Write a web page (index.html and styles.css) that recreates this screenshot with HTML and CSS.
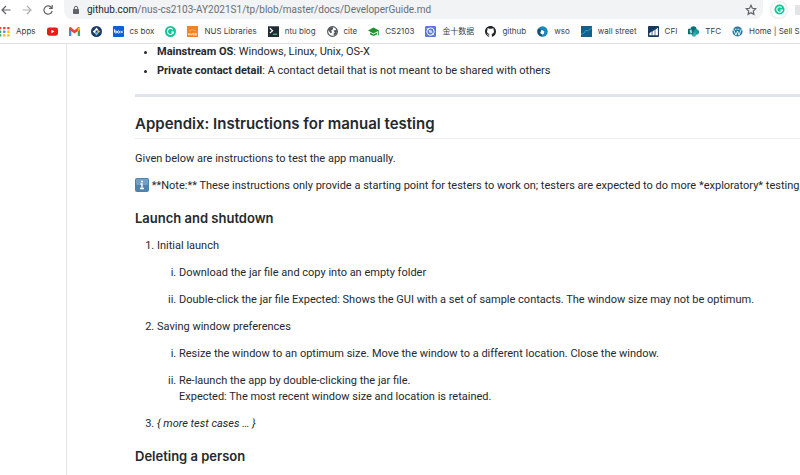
FILE: index.html
```
<!DOCTYPE html>
<html lang="en">
<head>
<meta charset="utf-8">
<title>DeveloperGuide.md</title>
<link rel="stylesheet" href="styles.css">
</head>
<body>
<header class="browser">
  <div class="toolbar">
    <button class="nav" aria-label="Back"><svg viewBox="0 0 12 12"><path d="M10.500 6H2M6 2L2 6l4 4"/></svg></button>
    <button class="nav faded" aria-label="Forward"><svg viewBox="0 0 12 12"><path d="M1.500 6H10M6 2l4 4-4 4"/></svg></button>
    <button class="nav" aria-label="Reload"><svg viewBox="0 0 12 12"><path d="M9.500 3.500A4.200 4.200 0 1 0 10.200 7M10.200 1v3.300H7"/></svg></button>
    <div class="address">
      <svg class="lock" viewBox="0 0 8 10"><rect x="1" y="4" width="6" height="5" rx=".7" fill="#5f6368"/><path d="M2.300 4.500V3a1.700 1.700 0 0 1 3.400 0v1.500" fill="none" stroke="#5f6368"/></svg>
      <a class="url" href="#"><span class="host">github.com</span>/nus-cs2103-AY2021S1/tp/blob/master/docs/DeveloperGuide.md</a>
      <button class="star" aria-label="Bookmark this page"><svg viewBox="0 0 12 12"><path d="M6 1.300l1.400 3 3.300.4-2.400 2.300.6 3.300L6 8.700l-2.900 1.600.6-3.300L1.300 4.700l3.300-.4z"/></svg></button>
    </div>
    <button class="extension" aria-label="Grammarly"><svg viewBox="0 0 12 12"><circle cx="6" cy="6" r="5.500" fill="#15c39a"/><path d="M8.300 4A3 3 0 1 0 9 6.500H6.800M9 6.500v1.800" fill="none" stroke="#fff" stroke-width="1.200"/></svg></button>
    <span class="extension-next"></span>
  </div>
  <nav class="bookmarks">
    <a href="#"><svg viewBox="0 0 12 12"><g fill="#ea4335"><path d="M0 1h2.500v2.500H0zM4.500 1H7v2.500H4.500zM9 1h2.500v2.500H9z"/></g><path d="M0 5h2.500v2.500H0zM0 9h2.500v2.500H0z" fill="#34a853"/><path d="M4.500 5H7v2.500H4.500z" fill="#4285f4"/><path d="M9 5h2.500v2.500H9zM4.500 9H7v2.500H4.500zM9 9h2.500v2.500H9z" fill="#fbbc05"/></svg>Apps</a>
    <a href="#" aria-label="YouTube"><svg viewBox="0 0 12 12"><rect y="1.500" width="12" height="9" rx="2.300" fill="#f01818"/><path d="M4.800 4v4l3.400-2z" fill="#fff"/></svg></a>
    <a href="#" aria-label="Gmail"><svg viewBox="0 0 12 12"><path d="M0 3l2.500 2v6H1a1 1 0 0 1-1-1z" fill="#4285f4"/><path d="M12 3L9.500 5v6H11a1 1 0 0 0 1-1z" fill="#34a853"/><path d="M0 2.500Q1-.1 3 2.200l3 2.300 3-2.300q2-2.300 3 .3v1.300L6 8.300 0 3.800z" fill="#ea4335"/><path d="M9.500 2L12 2.200v2L9.500 6z" fill="#fbbc05"/></svg></a>
    <a href="#" aria-label="Portal"><svg viewBox="0 0 12 12"><circle cx="6" cy="6" r="6" fill="#183b68"/><path d="M6 1.500L8 4 6 6 4 4zM4 4.300L6 6 4 8 1.800 6z" fill="#fff"/><path d="M8 4.300L10.200 6 8 8 6 6z" fill="#e9b949"/><path d="M6 6l2 2-2 2.500L4 8z" fill="#79bce8"/><circle cx="6" cy="6" r="1" fill="#183b68"/></svg></a>
    <a href="#"><svg viewBox="0 0 12 12"><rect width="12" height="12" rx="1" fill="#0861d5"/><g fill="none" stroke="#fff"><path d="M1.700 3.500v3"/><circle cx="3" cy="6.500" r="1.200"/><circle cx="6" cy="6.500" r="1.200"/><path d="M8.300 5.200l2.200 2.600M10.500 5.200L8.300 7.800"/></g></svg>cs box</a>
    <a href="#" aria-label="Grammarly"><svg viewBox="0 0 12 12"><circle cx="6" cy="6" r="6" fill="#15c39a"/><path d="M8.500 3.800A3.300 3.300 0 1 0 9.200 6.500H6.800M9.200 6.500v2" fill="none" stroke="#fff" stroke-width="1.200"/></svg></a>
    <a href="#"><svg viewBox="0 0 12 12"><rect width="12" height="12" fill="#f58220"/><path d="M1.500 10V8.200l1.200 1.500V8M4 8v1.800h1.500V8M8 8H6.500v1H8v1H6.500M9 8h1.500v2H9z" fill="none" stroke="#fff" stroke-width=".7"/><path d="M2 5.500q4-3 8 0" fill="none" stroke="#f9ad69"/></svg>NUS Libraries</a>
    <a href="#"><svg viewBox="0 0 12 12"><rect width="12" height="12" fill="#202b30"/><path d="M0 0h12v1H0z" fill="#637077"/><path d="M2 2.500l3 2.700-3 2.600" fill="none" stroke="#fff" stroke-width="1.300"/><path d="M5.500 9H10" stroke="#54c58b" stroke-width="1.300"/></svg>ntu blog</a>
    <a href="#"><svg viewBox="0 0 12 12"><circle cx="6" cy="6" r="5.300" fill="#fff" stroke="#50565b" stroke-width="1.300"/><path d="M1 4l3-3 3 .5L6 4 4.500 5l1 2L4 8zM7 5l4-1-.5 4L8 10.500 7 8.500 8.500 7z" fill="#50565b"/></svg>cite</a>
    <a href="#"><svg viewBox="0 0 12 12"><path d="M0 5l6-3.500L12 5 6 8.300zM2.300 7L6 9.200 9.700 7v2.300L6 11 2.300 9.300z" fill="#18942a"/><path d="M11.300 5v5" stroke="#18942a"/></svg>CS2103</a>
    <a href="#"><svg viewBox="0 0 12 12"><rect width="12" height="12" rx="1.500" fill="#5b72df"/><circle cx="6" cy="6" r="3.900" fill="none" stroke="#e9edff" stroke-width="1.200"/><path d="M4 4l3.500 1L8 8 4.600 7z" fill="#d0dafc"/><path d="M2 2.500l2 2M8 8l2 2" stroke="#e9edff"/></svg><span lang="zh">金十数据</span></a>
    <a href="#"><svg viewBox="0 0 16 16"><path fill="#202328" d="M8 0C3.580 0 0 3.580 0 8c0 3.540 2.290 6.530 5.470 7.590.4.070.55-.17.55-.38 0-.19-.01-.82-.01-1.490-2.010.37-2.530-.49-2.690-.94-.09-.23-.48-.94-.82-1.130-.28-.15-.68-.52-.01-.53.63-.01 1.080.58 1.230.82.72 1.210 1.870.87 2.330.66.070-.52.28-.87.51-1.070-1.780-.2-3.640-.89-3.640-3.950 0-.87.31-1.590.82-2.150-.08-.2-.36-1.020.08-2.120 0 0 .67-.21 2.200.82.64-.18 1.320-.27 2-.27s1.360.09 2 .27c1.530-1.040 2.200-.82 2.200-.82.44 1.100.16 1.920.08 2.120.51.56.82 1.270.82 2.150 0 3.070-1.870 3.750-3.650 3.950.29.25.54.73.54 1.480 0 1.070-.01 1.930-.01 2.200 0 .21.15.46.55.38A8.013 8.013 0 0 0 16 8c0-4.420-3.580-8-8-8z"/></svg>github</a>
    <a href="#"><svg viewBox="0 0 12 12"><circle cx="6" cy="6" r="5.700" fill="#1689b8"/><path d="M1 3l4 1-1 3 2 1.500L5 11.500Q0 10 .5 5z" fill="#194e72"/><path d="M5 4.200L8 6 7.500 8.500 5.800 9.500 3.500 7.500z" fill="#fff"/></svg>wso</a>
    <a href="#"><svg viewBox="0 0 12 12"><rect width="12" height="12" fill="#12618c"/><path d="M0 9l3-1 2-3 3 0 4-3" fill="none" stroke="#3ca0c9"/></svg>wall street</a>
    <a href="#"><svg viewBox="0 0 12 12"><rect width="12" height="12" rx="1" fill="#17395f"/><path d="M1.500 10V8L4 6v4M4.800 10V6l2.500-2v6M8 10V4l2.800-2v8" fill="#fff"/></svg>CFI</a>
    <a href="#"><svg viewBox="0 0 12 12"><circle cx="6" cy="3.500" r="3.300" fill="#087078"/><circle cx="9" cy="6.500" r="3" fill="#1898a0"/><circle cx="6.500" cy="9.200" r="2.500" fill="#38b2b4"/><rect y="3" width="6" height="6" rx=".6" fill="#056c72"/><path d="M4.200 4.600H2.300v1.300h1.800v1.500H2" fill="none" stroke="#fff" stroke-width=".8"/></svg>TFC</a>
    <a href="#"><svg viewBox="0 0 12 12"><circle cx="6" cy="6" r="5.500" fill="#23779d"/><path d="M1.500 3.700L4.300 10l1.700-4.500L7.700 10l2.500-6.500M3 3.500h2M6 3.500h2" fill="none" stroke="#fff" stroke-width="1"/></svg>Home | Sell Simply</a>
  </nav>
</header>
<div class="page">
  <main class="guide">
    <ul>
      <li><strong>Mainstream OS</strong>: Windows, Linux, Unix, OS-X</li>
      <li><strong>Private contact detail</strong>: A contact detail that is not meant to be shared with others</li>
    </ul>
    <hr>
    <h2>Appendix: Instructions for manual testing</h2>
    <p>Given below are instructions to test the app manually.</p>
    <p class="note"><svg class="info" viewBox="0 0 14 14"><rect width="14" height="14" rx="2" fill="#4f83ae"/><rect x="1" y="1" width="12" height="6" rx="1" fill="#729fc2"/><circle cx="7" cy="3.500" r="1" fill="#fff"/><path d="M5.500 6H7v4.500M5 10.500h4" fill="none" stroke="#fff" stroke-width="1.300"/></svg> **Note:** These instructions only provide a starting point for testers to work on; testers are expected to do more *exploratory* testing</p>
    <h3>Launch and shutdown</h3>
    <ol>
      <li><p>Initial launch</p>
        <ol>
          <li><p>Download the jar file and copy into an empty folder</p></li>
          <li><p>Double-click the jar file Expected: Shows the GUI with a set of sample contacts. The window size may not be optimum.</p></li>
        </ol>
      </li>
      <li><p>Saving window preferences</p>
        <ol>
          <li><p>Resize the window to an optimum size. Move the window to a different location. Close the window.</p></li>
          <li><p>Re-launch the app by double-clicking the jar file.<br>Expected: The most recent window size and location is retained.</p></li>
        </ol>
      </li>
      <li><p><em>{ more test cases … }</em></p></li>
    </ol>
    <h3>Deleting a person</h3>
  </main>
</div>
</body>
</html>
```
FILE: styles.css
```
* { box-sizing: border-box; }
body {
  margin: 0;
  height: 100vh;
  display: flex;
  flex-direction: column;
  overflow: hidden;
  background: #fff;
  color: #24292e;
  font: 11px/16px Roboto, sans-serif;
}
button { padding: 0; border: 0; background: none; }
a { color: inherit; text-decoration: none; }
svg { display: block; flex: none; }

.browser { flex: none; border-bottom: 1px solid #dfe1e3; }
.toolbar { display: flex; align-items: center; height: 19px; overflow: hidden; }
.nav { flex: none; width: 12px; margin-right: 9px; }
.nav svg, .star svg { width: 12px; height: 12px; fill: none; stroke: #5f6368; stroke-width: 1.2; }
.faded { opacity: .5; }
.address {
  flex: 1;
  display: flex;
  align-items: center;
  min-width: 0;
  height: 20px;
  margin-left: 1px;
  padding: 0 6px 0 8px;
  border-radius: 0 0 10px 10px;
  background: #f1f3f4;
}
.lock { width: 8px; height: 10px; margin-right: 7px; }
.url { flex: 1; font-size: 10px; color: #6b6f73; white-space: nowrap; overflow: hidden; }
.host { color: #24272b; }
.extension { flex: none; display: grid; place-items: center; width: 16px; height: 16px; margin: 0 8px; border-radius: 50%; box-shadow: 0 0 2px #b8bcc0; }
.extension svg { width: 11px; height: 11px; }
.extension-next { flex: none; width: 5px; height: 10px; background: #e3e4e6; }

.bookmarks {
  display: flex;
  align-items: center;
  gap: 11px;
  height: 24px;
  margin-left: -1px;
  overflow: hidden;
  color: #3c4043;
  font-family: Inter, "Noto Sans CJK SC", sans-serif;
  font-size: 8px;
  white-space: nowrap;
}
.bookmarks a { flex: none; display: flex; align-items: center; gap: 6px; }
.bookmarks svg { width: 11px; height: 11px; }

.page { flex: 1; min-height: 0; overflow: hidden; padding-left: 66px; }
.guide { min-height: 100%; padding-left: 68px; border-left: 1px solid #e1e4e8; }
ul, ol { margin: 0; padding-left: 22px; }
ul li + li { margin-top: 3px; }
ol ol { list-style: lower-roman; }
p { margin: 0 0 11px; }
.note { white-space: nowrap; }
.info { display: inline-block; width: 14px; height: 14px; vertical-align: -3px; }
strong { font-weight: 700; }
h2, h3 { font-family: Inter, sans-serif; font-weight: 600; }
hr { height: 3px; margin: 15px 0 16px; border: 0; background: #e1e4e8; }
h2 { margin: 0 0 12px; padding-bottom: 3px; border-bottom: 1px solid #eaecef; font-size: 15px; line-height: 22px; }
h3 { margin: 16px 0 12px; font-size: 13px; line-height: 16px; }
```
